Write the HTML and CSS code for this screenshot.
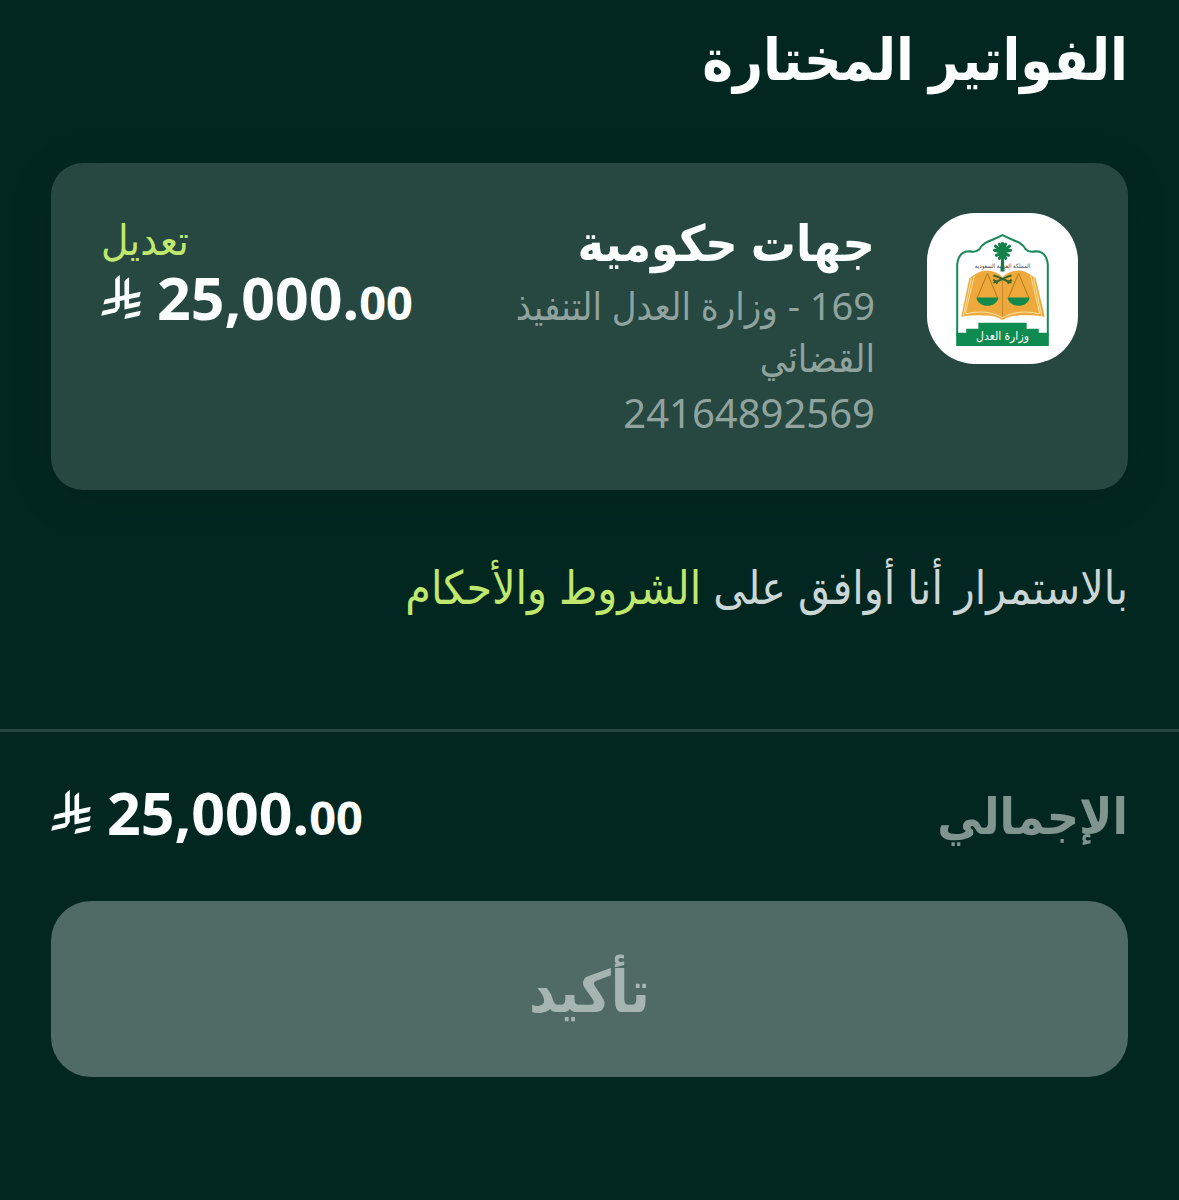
FILE: index.html
```html
<!DOCTYPE html>
<html lang="ar" dir="rtl">
<head>
    <meta charset="UTF-8">
    <meta name="viewport" content="width=device-width, initial-scale=1.0">
    <title>الفواتير المختارة</title>
    <link rel="stylesheet" href="styles.css">
</head>
<body>
    <!-- riyal sign, used twice -->
    <svg class="defs" width="0" height="0" aria-hidden="true">
        <symbol id="riyal" viewBox="0 0 1124 1257">
            <path d="M699.62,1113.02c-20.06,44.48-33.32,92.75-38.4,143.37l424.51-90.24c20.06-44.47,33.31-92.75,38.4-143.37l-424.51,90.24Z"/>
            <path d="M1085.73,895.8c20.06-44.47,33.32-92.75,38.4-143.37l-330.68,70.33v-135.2l292.27-62.11c20.06-44.47,33.32-92.75,38.4-143.37l-330.68,70.27V66.13c-50.67,28.45-95.67,66.32-132.25,110.99v403.35l-132.25,28.11V0c-50.67,28.44-95.67,66.32-132.25,110.99v525.69l-295.91,62.88c-20.06,44.47-33.33,92.75-38.42,143.37l334.33-71.05v170.26l-358.3,76.14c-20.06,44.47-33.32,92.75-38.4,143.37l375.04-79.7c30.53-6.35,56.77-24.4,73.83-49.24l68.78-101.97c7.14-10.55,11.3-23.27,11.3-36.97v-149.98l132.25-28.11v270.4l424.53-90.28Z"/>
        </symbol>
    </svg>

    <main class="content">
        <h1 class="title">الفواتير المختارة</h1>

        <section class="card">
            <div class="logo">
                <svg viewBox="0 0 150 150" role="img" aria-label="وزارة العدل">
                    <!-- arch -->
                    <path d="M30 122V51C31 42 35 38 42 38C46 39 49 39 52 36C56 28 64 28 75 22C86 28 94 28 98 36C101 39 104 39 108 38C115 38 119 42 120 51V122" fill="none" stroke="#1b8a5a" stroke-width="2"/>
                    <!-- book -->
                    <path d="M34 103L42 65C47 61 51 58 58 57C66 57 72 60 75 64C78 60 84 57 92 57C99 58 103 61 108 65L117 103C102 101 88 101 79 104Q75 108 71 104C62 101 48 101 34 103Z" fill="#eda93b"/>
                    <path d="M47 62L38 100M44 65L36 102M103 62L112 100M106 65L114 102M38 100C52 97 65 98 75 104C85 98 98 97 112 100" fill="none" stroke="#fbe0a4" stroke-width="1"/>
                    <path d="M75 66V102" stroke="#c9852a" stroke-width="1"/>
                    <!-- scales -->
                    <path d="M60 60L50 84M60 60L70 84M91 60L81 84M91 60L101 84" fill="none" stroke="#b77c1e" stroke-width="1"/>
                    <path d="M49 84H71C69 95 51 95 49 84ZM80 84H102C100 95 82 95 80 84Z" fill="#138a4c"/>
                    <text class="logo-country" x="75" y="55">المملكة العربية السعودية</text>
                    <!-- swords -->
                    <path d="M66 62C72 63 78 68 84 69M84 62C78 63 72 68 66 69M66 66l4 4M84 66l-4 4" fill="none" stroke="#35662f" stroke-width="2"/>
                    <!-- palm -->
                    <path d="M74 38H76L77 58H73Z" fill="#17784b"/>
                    <path d="M75 39L67 37M75 39L68 33M75 39L72 31M75 39L78 31M75 39L82 33M75 39L83 37M75 39L69 42M75 39L81 42M75 39L72 45M75 39L78 45M75 39V30" fill="none" stroke="#14804a" stroke-width="3" stroke-linecap="round"/>
                    <!-- base -->
                    <path d="M29 119H39V115H51V109H99V115H111V119H121V132H29Z" fill="#0d8b50"/>
                    <text class="logo-name" x="75" y="126">وزارة العدل</text>
                </svg>
            </div>
            <div class="info">
                <h2 class="name">جهات حكومية</h2>
                <p class="desc">169 - وزارة العدل التنفيذ القضائي</p>
                <p class="number">24164892569</p>
            </div>
            <div class="side">
                <a class="edit" href="#">تعديل</a>
                <div class="amount" dir="ltr">
                    <svg class="riyal" aria-hidden="true"><use href="#riyal"/></svg>
                    <span>25,000.<small>00</small></span>
                </div>
            </div>
        </section>

        <p class="terms">بالاستمرار أنا أوافق على <a href="#">الشروط والأحكام</a></p>
    </main>

    <footer class="footer">
        <div class="total">
            <span class="total-label">الإجمالي</span>
            <div class="amount" dir="ltr">
                <svg class="riyal" aria-hidden="true"><use href="#riyal"/></svg>
                <span>25,000.<small>00</small></span>
            </div>
        </div>
        <button class="confirm" type="button" disabled>تأكيد</button>
    </footer>
</body>
</html>
```
FILE: styles.css
```css
*{
    margin: 0;
    padding: 0;
    box-sizing: border-box;
}
body{
    min-height: 100vh;
    background: #022721;
    color: #fbfefd;
    font-family: "Noto Sans", "DejaVu Sans Condensed", sans-serif;
}
a{
    color: #c1e86e;
    text-decoration: none;
}
.defs{
    position: absolute;
}
.content{
    padding: 20px 51px 0;
}
.title{
    font-size: 58px;
    line-height: 76px;
}
/* bill card */
.card{
    display: flex;
    align-items: flex-start;
    margin-top: 67px;
    padding: 50px;
    min-height: 327px;
    border-radius: 32px;
    background: #274841;
    box-shadow: 0 8px 40px rgba(0, 20, 16, 0.2);
}
.logo{
    flex: none;
    width: 151px;
    height: 151px;
    border-radius: 48px;
    background: #fff;
}
.logo svg{
    display: block;
}
.logo-country{
    font-size: 6px;
    fill: #444;
    text-anchor: middle;
}
.logo-name{
    font-size: 12px;
    fill: #fff;
    text-anchor: middle;
}
.info{
    flex: 1;
    padding: 0 52px 0 30px;
}
.name{
    font-size: 50px;
    line-height: 58px;
}
.desc,
.number{
    color: #90a39f;
    font-size: 40px;
    line-height: 52px;
}
.desc{
    margin-top: 8px;
    font-size: 38px;
}
.number{
    margin-top: 4px;
}
.side{
    flex: none;
}
.edit{
    display: block;
    font-size: 42px;
    line-height: 52px;
    text-align: left;
}
.amount{
    display: flex;
    align-items: center;
    gap: 16px;
    font-size: 59px;
    font-weight: bold;
    line-height: 64px;
}
.amount small{
    font-size: 47px;
}
.riyal{
    width: 40px;
    height: 44px;
    margin-bottom: 6px;
    fill: currentColor;
}
.terms{
    margin-top: 66px;
    color: #cbd6d6;
    font-size: 46px;
    line-height: 60px;
}
/* total and confirm */
.footer{
    margin-top: 113px;
    padding: 48px 51px 0;
    border-top: 3px solid #274841;
}
.total{
    display: flex;
    align-items: center;
    justify-content: space-between;
}
.total-label{
    color: #80958f;
    font-size: 50px;
    font-weight: bold;
    line-height: 64px;
}
.confirm{
    display: block;
    width: 100%;
    height: 176px;
    margin-top: 52px;
    border: none;
    border-radius: 40px;
    background: #506b65;
    color: #a7b5b2;
    font-family: inherit;
    font-size: 58px;
    font-weight: bold;
}
```
